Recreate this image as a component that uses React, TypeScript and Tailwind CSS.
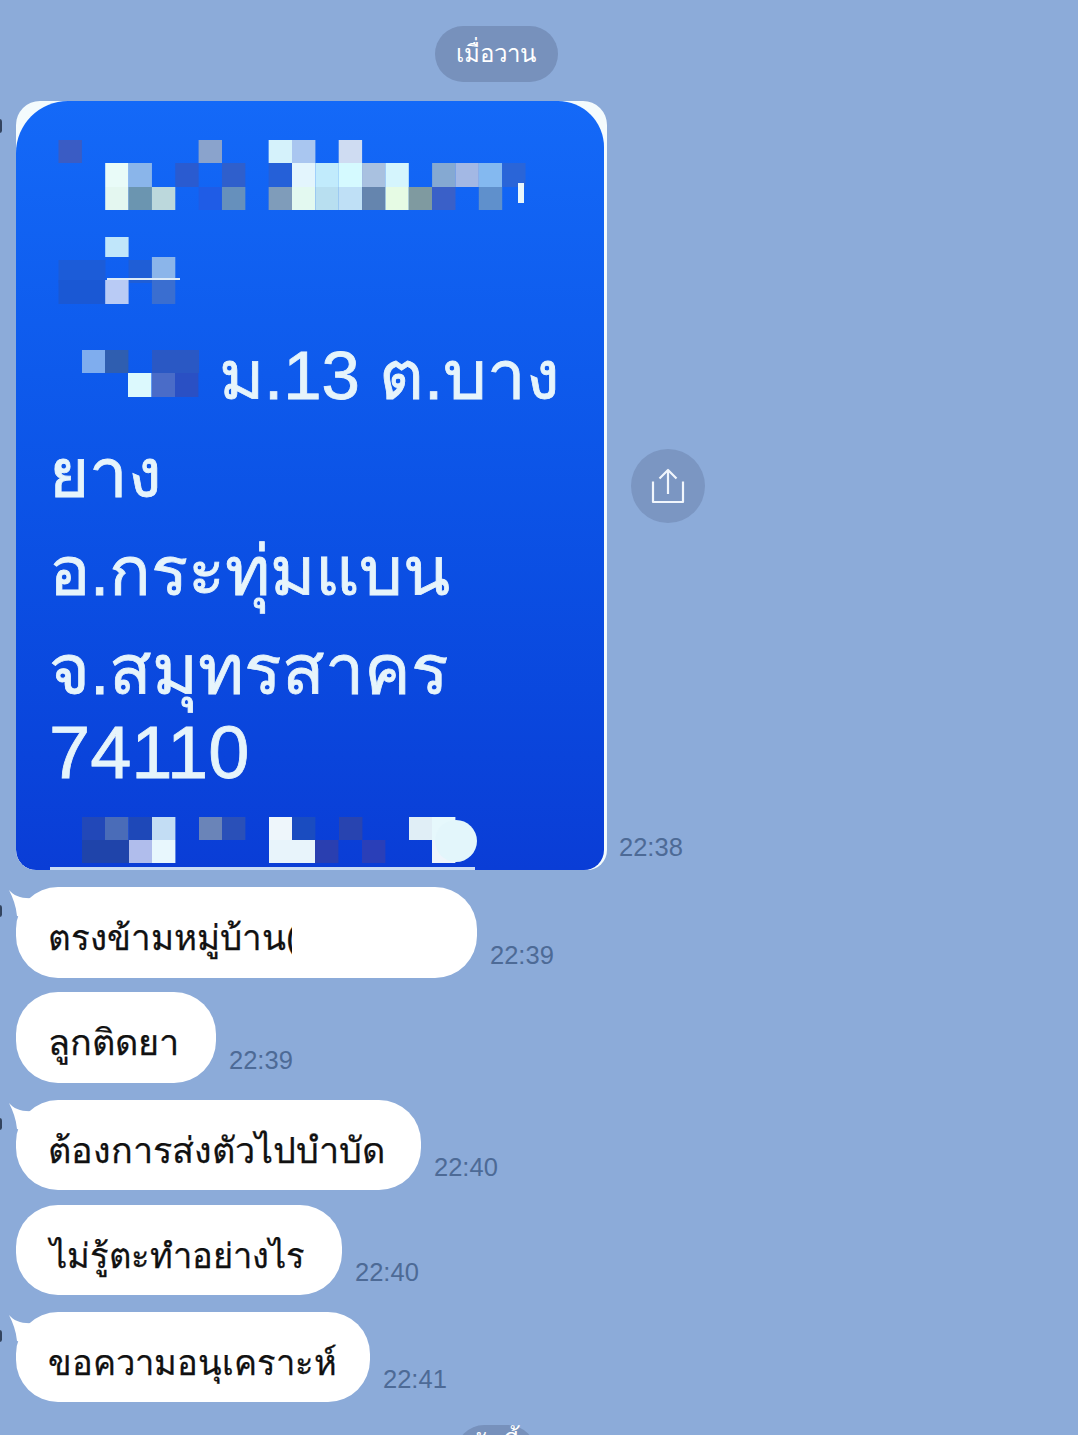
import React from 'react';

type Block = [number, number, number, number, string];

// pixelated (censored) parts of the forwarded picture: x, y, w, h, colour
const c = (n: number) => 58.5 + 23.35 * n;
const BLOCKS: Block[] = [
  // first line
  [c(0), 140, 23.4, 23, '#3a5cc4'], [c(6), 140, 23.4, 23, '#8aa3cc'], [c(9), 140, 23.4, 23, '#d5f2fb'],
  [c(10), 140, 23.4, 23, '#a9c6f0'], [c(12), 140, 23.4, 23, '#cfdcf2'],
  [c(2), 163, 23.4, 24, '#e9fbf8'], [c(3), 163, 23.4, 24, '#8ab5ea'], [c(5), 163, 23.4, 24, '#2a5bd0'],
  [c(7), 163, 23.4, 24, '#2f5fcc'], [c(9), 163, 23.4, 24, '#2560d8'], [c(10), 163, 23.4, 24, '#e3f5fd'],
  [c(11), 163, 23.4, 24, '#c1ebfc'], [c(12), 163, 23.4, 24, '#d5faff'], [c(13), 163, 23.4, 24, '#a9c1e0'],
  [c(14), 163, 23.4, 24, '#d5f5fd'], [c(16), 163, 23.4, 24, '#85a9d2'], [c(17), 163, 23.4, 24, '#a3b8e4'],
  [c(18), 163, 23.4, 24, '#84b9f0'], [c(19), 163, 23.4, 24, '#2a65d8'],
  [c(2), 187, 23.4, 23, '#e4f7f0'], [c(3), 187, 23.4, 23, '#6b95b0'], [c(4), 187, 23.4, 23, '#bcd8dc'],
  [c(6), 187, 23.4, 23, '#1f5ce6'], [c(7), 187, 23.4, 23, '#6690bc'], [c(9), 187, 23.4, 23, '#7f9cba'],
  [c(10), 187, 23.4, 23, '#e3f9f0'], [c(11), 187, 23.4, 23, '#b8dff0'], [c(12), 187, 23.4, 23, '#bfe0f6'],
  [c(13), 187, 23.4, 23, '#6585ae'], [c(14), 187, 23.4, 23, '#e6fbe4'], [c(15), 187, 23.4, 23, '#7f9aa0'],
  [c(16), 187, 23.4, 23, '#3a60c8'], [c(18), 187, 23.4, 23, '#5f90cc'],
  [518, 183, 6, 20, '#e8f6fb'],
  // second line
  [c(2), 237, 23.4, 20, '#c0e6fa'],
  [c(0), 260, 47, 23, '#1c5cd8'], [c(3), 260, 23.4, 23, '#1f5ed6'], [c(4), 257, 23.4, 23, '#8bb5ea'],
  [c(0), 280, 47, 24, '#1a58d4'], [c(2), 280, 23.4, 24, '#b9cbf5'], [c(4), 280, 23.4, 24, '#3a6ed0'],
  [107, 278, 73, 2, '#dcebf8'],
  // third line
  [82, 350, 23.4, 23, '#7fadee'], [105, 350, 23.4, 23, '#2f5eb0'], [152, 350, 47, 23, '#2a58c4'],
  [128, 373, 23.4, 24, '#dcf9fd'], [152, 373, 23.4, 24, '#4a6cc8'], [175, 373, 23.4, 24, '#2a50c4'],
  // last line
  [82, 817, 23.4, 23, '#2248b8'], [105, 817, 23.4, 23, '#4a6cb8'], [129, 817, 23.4, 23, '#1e48b8'],
  [152, 817, 23.4, 23, '#c3ddf4'], [199, 817, 23.4, 23, '#6a84b8'], [222, 817, 23.4, 23, '#2a50b8'],
  [269, 817, 23.4, 23, '#eef6fb'], [292, 817, 23.4, 23, '#1a4cc0'], [339, 817, 23.4, 23, '#2844b0'],
  [409, 817, 23.4, 23, '#e0eef6'], [432, 817, 23.4, 23, '#e6f8fc'],
  [82, 840, 47, 23, '#1f44aa'], [129, 840, 23.4, 23, '#b0bdec'], [152, 840, 23.4, 23, '#e8f7fd'],
  [269, 840, 47, 23, '#e8f4fb'], [315, 840, 23.4, 23, '#2a3fb0'], [362, 840, 23.4, 23, '#2a3fb8'],
  [432, 840, 23.4, 23, '#eef5fb'],
  [50, 867, 425, 3, '#c9dcf4'],
];

const MESSAGES = [
  { text: 'ตรงข้ามหมู่บ้าน(', time: '22:39', width: 'w-[461px]', height: 'h-[91px]', gap: 'mt-[17px]', size: 'w-[244px] overflow-hidden text-[35px]', tail: true },
  { text: 'ลูกติดยา', time: '22:39', width: 'w-[200px]', height: 'h-[91px]', gap: 'mt-[14px]', size: 'text-[36px]', tail: false },
  { text: 'ต้องการส่งตัวไปบำบัด', time: '22:40', width: 'w-[405px]', height: 'h-[90px]', gap: 'mt-[17px]', size: 'text-[36px]', tail: true },
  { text: 'ไม่รู้ตะทำอย่างไร', time: '22:40', width: 'w-[326px]', height: 'h-[90px]', gap: 'mt-[15px]', size: 'ml-[2px] text-[34.5px]', tail: false },
  { text: 'ขอความอนุเคราะห์', time: '22:41', width: 'w-[354px]', height: 'h-[90px]', gap: 'mt-[17px]', size: 'text-[34.5px]', tail: true },
];

const Time: React.FC<{ value: string }> = ({ value }) => (
  <span className="text-[25.5px] leading-[28px] text-[#4d6a96] whitespace-nowrap">{value}</span>
);

const App: React.FC = () => {
  return (
    <div
      className="h-[1435px] w-[1078px] overflow-hidden bg-[#8cabd9] pt-[26px]"
      style={{ fontFamily: '"Liberation Sans", "Noto Sans", "DejaVu Sans", sans-serif' }}
    >
      {/* Date pill */}
      <div className="flex justify-center">
        <div className="ml-[-86px] flex h-[56px] w-[123px] items-center justify-center rounded-full bg-[#7791bc] text-[24px] text-white">
          เมื่อวาน
        </div>
      </div>

      {/* Forwarded picture */}
      <div className="relative mt-[19px] flex pl-[16px]">
        <span className="absolute left-[-3px] top-[18px] h-[14px] w-[5px] rounded-full bg-[#33445f]" />
        <div className="relative h-[769px] w-[591px] overflow-hidden rounded-b-[20px] rounded-t-[24px] bg-[#f4fbfd]">
          <div className="mr-[3px] flex h-full flex-col rounded-b-[20px] rounded-tl-[52px] rounded-tr-[46px] bg-gradient-to-b from-[#1469f8] to-[#0a3dd6] pl-[33px] pt-[236px] text-[#e6f4fb] [-webkit-text-stroke:0.8px_#e6f4fb]">
            <p className="h-[78px] whitespace-nowrap pl-[170px] text-[69px] leading-[78px]">ม.13 ต.บาง</p>
            <p className="mt-[20px] h-[78px] text-[69px] leading-[78px]">ยาง</p>
            <p className="mt-[20px] h-[78px] text-[69px] leading-[78px]">อ.กระทุ่มแบน</p>
            <p className="mt-[20px] h-[78px] text-[70px] leading-[78px]">จ.สมุทรสาคร</p>
            <p className="mt-[5px] h-[78px] text-[74px] leading-[78px]">74110</p>
          </div>
          <svg className="absolute inset-0" width="591" height="769" viewBox="16 101 591 769">
            {BLOCKS.map(([x, y, w, h, fill], i) => (
              <rect key={i} x={x} y={y} width={w} height={h} fill={fill} />
            ))}
            <circle cx="456" cy="841" r="21" fill="#e3f6fb" />
          </svg>
        </div>

        <div className="flex flex-col">
          <div className="flex-[1_1_0px]" />
          <div className="ml-[24px] flex h-[74px] w-[74px] items-center justify-center rounded-full bg-[#7b96c2]">
            <svg width="36" height="38" viewBox="0 0 36 38" fill="none" stroke="#f1f6fc" strokeWidth="2.2" strokeLinejoin="round">
              <path d="M18 3v24M9.5 11.5 18 3l8.5 8.5" />
              <path d="M3 14.5V35h30V14.5" />
            </svg>
          </div>
          <div className="flex flex-[1_1_0px] flex-col justify-end">
            <div className="mb-[7px] ml-[12px]">
              <Time value="22:38" />
            </div>
          </div>
        </div>
      </div>

      {/* Text messages */}
      {MESSAGES.map((m) => (
        <div key={m.text + m.time} className={`relative flex items-end pl-[16px] ${m.gap}`}>
          {m.tail && (
            <>
              <span className="absolute left-[-3px] top-[18px] h-[12px] w-[5px] rounded-full bg-[#33445f]" />
              <svg className="absolute left-[8px] top-[3px]" width="30" height="32" viewBox="0 0 30 32">
                <path d="M1 0C6 6 14 9 26 8L28 30 9 26C8 16 5 8 1 0Z" fill="#fff" />
              </svg>
            </>
          )}
          <div className={`relative flex items-center rounded-[42px] bg-white pl-[32px] pt-[11px] ${m.width} ${m.height}`}>
            <span className={`whitespace-nowrap leading-[50px] text-[#111] [-webkit-text-stroke:0.25px_#111] ${m.size}`}>{m.text}</span>
          </div>
          <div className="mb-[7px] ml-[13px]">
            <Time value={m.time} />
          </div>
        </div>
      ))}

      {/* Next date pill, cut off by the bottom edge */}
      <div className="mt-[23px] flex justify-center">
        <div className="ml-[-86px] flex h-[56px] w-[80px] items-start justify-center rounded-full bg-[#7791bc] text-[25px] text-white">
          วันนี้
        </div>
      </div>
    </div>
  );
};

export default App;
